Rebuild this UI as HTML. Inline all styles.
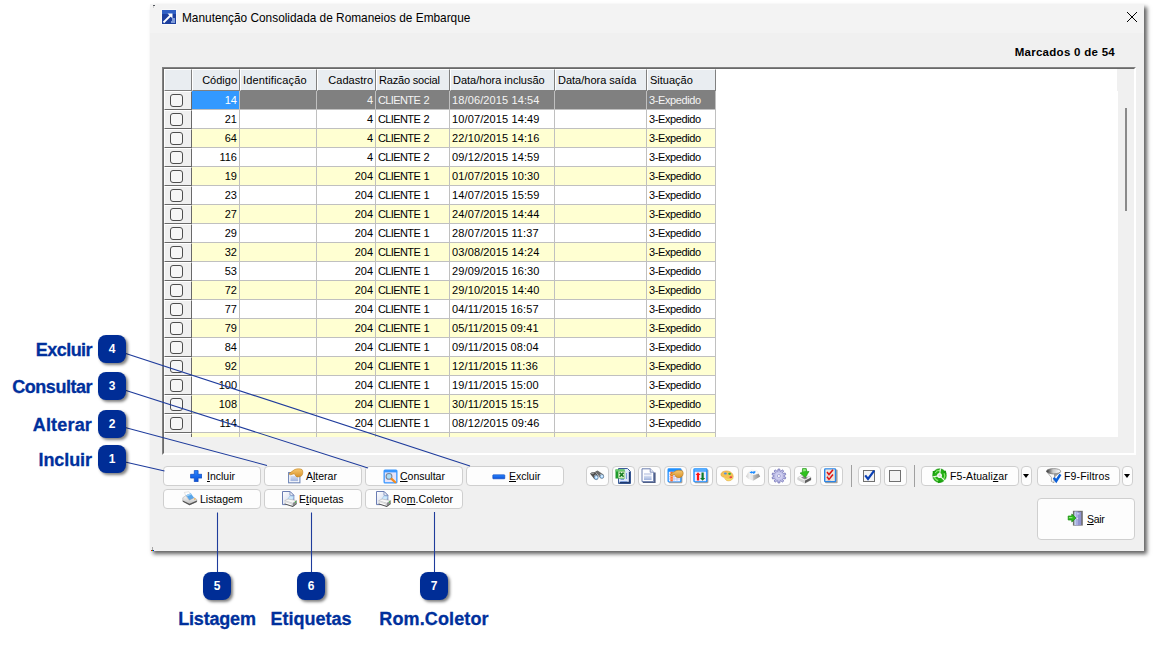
<!DOCTYPE html>
<html lang="pt-BR"><head><meta charset="utf-8"><title>Manutenção Consolidada de Romaneios de Embarque</title>
<style>
html,body{margin:0;padding:0;}
body{width:1153px;height:647px;background:#fff;position:relative;overflow:hidden;font-family:"Liberation Sans",sans-serif;font-size:11px;color:#000;}
*{box-sizing:border-box;}
.abs{position:absolute;}
.win{position:absolute;left:150px;top:4px;width:994px;height:547px;background:#f0f0f0;box-shadow:3px 3px 4px rgba(0,0,0,.62);}
.tbar{position:absolute;left:0;top:0;width:994px;height:29px;background:#f3f3f3;}
.ttl{position:absolute;left:32px;top:6px;font-size:11.85px;line-height:16px;white-space:nowrap;color:#000;}
.marc{position:absolute;right:29px;top:41px;font-size:11.5px;letter-spacing:.28px;font-weight:bold;line-height:14px;white-space:nowrap;}
.grid{position:absolute;left:164px;top:69px;width:970px;height:384px;background:#fff;overflow:hidden;}
.gridb{position:absolute;left:162px;top:67px;width:974px;height:388px;border:1px solid;border-color:#828282 #fff #fff #828282;}
.gridb i{position:absolute;left:0;top:0;right:0;bottom:0;border:1px solid;border-color:#696969 #fff #fff #696969;}
.hrow{position:absolute;left:0;top:0;height:22px;width:552px;}
.hc{position:absolute;top:0;height:22px;background:#e9edf1;border:1px solid;border-color:#fff #808080 #808080 #fff;padding:3px 2px 0 2px;line-height:14px;white-space:nowrap;overflow:hidden;}
.hc.r{text-align:right;}
.row{position:absolute;left:0;height:19px;width:552px;}
.row .c{position:absolute;top:0;height:19px;border-right:1px solid #c0c0c0;border-bottom:1px solid #c0c0c0;padding:2px 2px 0 2px;line-height:14px;white-space:nowrap;overflow:hidden;background:#fff;}
.row.alt .c{background:#ffffd2;}
.row.sel .c{background:#808080;color:#f4f4f4;border-color:#c0c0c0;}
.row.sel .c.cur{background:#3399ff;color:#fff;}
.c.r{text-align:right;}
.fc{position:absolute;top:0;height:19px;background:#f0f0f0;border:1px solid;border-color:#fff #696969 #696969 #fff;}
.cb{position:absolute;left:5px;top:2px;width:13px;height:13px;border:1px solid #4d4d4d;border-radius:3px;background:#f6f6f6;}
.row.part{height:4px;overflow:hidden;}
.vsb{position:absolute;left:954px;top:0;width:16px;height:368px;background:#f0f0f0;}
.vthumb{position:absolute;left:7px;top:39px;width:2px;height:103px;background:#8a8a8a;}
.hsb{position:absolute;left:0;top:368px;width:970px;height:16px;background:#f0f0f0;}
.btn{position:absolute;height:20px;border:1px solid #cfcfcf;border-radius:4px;background:#fdfdfd;font-size:10.5px;line-height:14px;white-space:nowrap;}
.btn.sb{width:23px;}
.btn.sb svg{left:2px;top:1px;}
.btn.dd{width:11px;}
.btn.dd i{position:absolute;left:1px;top:7px;width:0;height:0;border-left:3.5px solid transparent;border-right:3.5px solid transparent;border-top:4px solid #000;}
.btn .t{position:absolute;top:2px;}
.btn svg{position:absolute;}
u{text-decoration:underline;}
.badge{position:absolute;width:28px;height:28px;border-radius:8px;background:#002d96;color:#fff;font-weight:bold;font-size:12px;line-height:28px;text-align:center;box-shadow:2px 2px 3px rgba(0,0,0,.5);}
.lbl{position:absolute;color:#00309c;font-weight:bold;font-size:18px;line-height:20px;white-space:nowrap;letter-spacing:-0.6px;}
.lbl.c{width:200px;text-align:center;}
.sep{position:absolute;width:1px;background:#a0a0a0;}
.k4{letter-spacing:-.62px;}
.k5{letter-spacing:.12px;}
.k7{letter-spacing:-.4px;}
.h2{letter-spacing:.15px;}
.h4{letter-spacing:-.18px;}
.lbl{-webkit-text-stroke:.3px #00309c;}
.vsx{position:absolute;left:953px;top:0;width:1px;height:22px;background:#f0f0f0;}
.k4{word-spacing:1px;}

</style></head>
<body>
<div class="win">
 <div class="tbar"></div>
 <svg class="abs" style="left:11px;top:5px" width="16" height="16" viewBox="0 0 16 16"><rect x="0.5" y="0.5" width="15" height="15" fill="#fff"/><rect x="1" y="1" width="14" height="14" fill="#1c3f9e"/><rect x="1" y="1" width="14" height="4" fill="#2f5fc4"/><path d="M2.5 13.5 L9.5 6.5" stroke="#fff" stroke-width="1.8" fill="none"/><path d="M6.5 4.5 H11.5 V9.5 Z" fill="#fff"/><path d="M11 9h3v5h-4v-2h1z" fill="#7f9bd8"/></svg>
 <div class="ttl">Manutenção Consolidada de Romaneios de Embarque</div>
 <svg class="abs" style="left:976px;top:7px" width="12" height="12" viewBox="0 0 12 12"><path d="M1 1 L11 11 M11 1 L1 11" stroke="#000" stroke-width="1" fill="none"/></svg>
 <div class="marc">Marcados 0 de 54</div>
</div>
<div class="abs" style="left:153px;top:5px;width:2px;height:1px;background:#55595f"></div><div class="abs" style="left:153px;top:6px;width:1px;height:2px;background:#d0d0d0"></div>
<div class="abs" style="left:151px;top:550px;width:1px;height:1px;background:#f00"></div><div class="abs" style="left:152px;top:550px;width:1px;height:1px;background:#0c0"></div><div class="abs" style="left:153px;top:550px;width:1px;height:1px;background:#00f"></div><div class="abs" style="left:152px;top:547px;width:1px;height:3px;background:#a8a8a8"></div>
<div class="gridb"><i></i></div>
<div class="grid">
<div class="hrow"><div class="hc h0 fx" style="left:0px;width:28px"></div><div class="hc h1 r" style="left:28px;width:48px">Código</div><div class="hc h2" style="left:76px;width:77px">Identificação</div><div class="hc h3 r" style="left:153px;width:59px">Cadastro</div><div class="hc h4" style="left:212px;width:74px">Razão social</div><div class="hc h5" style="left:286px;width:105px">Data/hora inclusão</div><div class="hc h6" style="left:391px;width:92px">Data/hora saída</div><div class="hc h7" style="left:483px;width:69px">Situação</div></div>
<div class="row sel" style="top:22px"><div class="fc" style="left:0px;width:28px"><span class="cb"></span></div><div class="c k1 r cur" style="left:28px;width:48px">14</div><div class="c k2" style="left:76px;width:77px"></div><div class="c k3 r" style="left:153px;width:59px">4</div><div class="c k4" style="left:212px;width:74px">CLIENTE 2</div><div class="c k5" style="left:286px;width:105px">18/06/2015 14:54</div><div class="c k6" style="left:391px;width:92px"></div><div class="c k7" style="left:483px;width:69px">3-Expedido</div></div>
<div class="row" style="top:41px"><div class="fc" style="left:0px;width:28px"><span class="cb"></span></div><div class="c k1 r" style="left:28px;width:48px">21</div><div class="c k2" style="left:76px;width:77px"></div><div class="c k3 r" style="left:153px;width:59px">4</div><div class="c k4" style="left:212px;width:74px">CLIENTE 2</div><div class="c k5" style="left:286px;width:105px">10/07/2015 14:49</div><div class="c k6" style="left:391px;width:92px"></div><div class="c k7" style="left:483px;width:69px">3-Expedido</div></div>
<div class="row alt" style="top:60px"><div class="fc" style="left:0px;width:28px"><span class="cb"></span></div><div class="c k1 r" style="left:28px;width:48px">64</div><div class="c k2" style="left:76px;width:77px"></div><div class="c k3 r" style="left:153px;width:59px">4</div><div class="c k4" style="left:212px;width:74px">CLIENTE 2</div><div class="c k5" style="left:286px;width:105px">22/10/2015 14:16</div><div class="c k6" style="left:391px;width:92px"></div><div class="c k7" style="left:483px;width:69px">3-Expedido</div></div>
<div class="row" style="top:79px"><div class="fc" style="left:0px;width:28px"><span class="cb"></span></div><div class="c k1 r" style="left:28px;width:48px">116</div><div class="c k2" style="left:76px;width:77px"></div><div class="c k3 r" style="left:153px;width:59px">4</div><div class="c k4" style="left:212px;width:74px">CLIENTE 2</div><div class="c k5" style="left:286px;width:105px">09/12/2015 14:59</div><div class="c k6" style="left:391px;width:92px"></div><div class="c k7" style="left:483px;width:69px">3-Expedido</div></div>
<div class="row alt" style="top:98px"><div class="fc" style="left:0px;width:28px"><span class="cb"></span></div><div class="c k1 r" style="left:28px;width:48px">19</div><div class="c k2" style="left:76px;width:77px"></div><div class="c k3 r" style="left:153px;width:59px">204</div><div class="c k4" style="left:212px;width:74px">CLIENTE 1</div><div class="c k5" style="left:286px;width:105px">01/07/2015 10:30</div><div class="c k6" style="left:391px;width:92px"></div><div class="c k7" style="left:483px;width:69px">3-Expedido</div></div>
<div class="row" style="top:117px"><div class="fc" style="left:0px;width:28px"><span class="cb"></span></div><div class="c k1 r" style="left:28px;width:48px">23</div><div class="c k2" style="left:76px;width:77px"></div><div class="c k3 r" style="left:153px;width:59px">204</div><div class="c k4" style="left:212px;width:74px">CLIENTE 1</div><div class="c k5" style="left:286px;width:105px">14/07/2015 15:59</div><div class="c k6" style="left:391px;width:92px"></div><div class="c k7" style="left:483px;width:69px">3-Expedido</div></div>
<div class="row alt" style="top:136px"><div class="fc" style="left:0px;width:28px"><span class="cb"></span></div><div class="c k1 r" style="left:28px;width:48px">27</div><div class="c k2" style="left:76px;width:77px"></div><div class="c k3 r" style="left:153px;width:59px">204</div><div class="c k4" style="left:212px;width:74px">CLIENTE 1</div><div class="c k5" style="left:286px;width:105px">24/07/2015 14:44</div><div class="c k6" style="left:391px;width:92px"></div><div class="c k7" style="left:483px;width:69px">3-Expedido</div></div>
<div class="row" style="top:155px"><div class="fc" style="left:0px;width:28px"><span class="cb"></span></div><div class="c k1 r" style="left:28px;width:48px">29</div><div class="c k2" style="left:76px;width:77px"></div><div class="c k3 r" style="left:153px;width:59px">204</div><div class="c k4" style="left:212px;width:74px">CLIENTE 1</div><div class="c k5" style="left:286px;width:105px">28/07/2015 11:37</div><div class="c k6" style="left:391px;width:92px"></div><div class="c k7" style="left:483px;width:69px">3-Expedido</div></div>
<div class="row alt" style="top:174px"><div class="fc" style="left:0px;width:28px"><span class="cb"></span></div><div class="c k1 r" style="left:28px;width:48px">32</div><div class="c k2" style="left:76px;width:77px"></div><div class="c k3 r" style="left:153px;width:59px">204</div><div class="c k4" style="left:212px;width:74px">CLIENTE 1</div><div class="c k5" style="left:286px;width:105px">03/08/2015 14:24</div><div class="c k6" style="left:391px;width:92px"></div><div class="c k7" style="left:483px;width:69px">3-Expedido</div></div>
<div class="row" style="top:193px"><div class="fc" style="left:0px;width:28px"><span class="cb"></span></div><div class="c k1 r" style="left:28px;width:48px">53</div><div class="c k2" style="left:76px;width:77px"></div><div class="c k3 r" style="left:153px;width:59px">204</div><div class="c k4" style="left:212px;width:74px">CLIENTE 1</div><div class="c k5" style="left:286px;width:105px">29/09/2015 16:30</div><div class="c k6" style="left:391px;width:92px"></div><div class="c k7" style="left:483px;width:69px">3-Expedido</div></div>
<div class="row alt" style="top:212px"><div class="fc" style="left:0px;width:28px"><span class="cb"></span></div><div class="c k1 r" style="left:28px;width:48px">72</div><div class="c k2" style="left:76px;width:77px"></div><div class="c k3 r" style="left:153px;width:59px">204</div><div class="c k4" style="left:212px;width:74px">CLIENTE 1</div><div class="c k5" style="left:286px;width:105px">29/10/2015 14:40</div><div class="c k6" style="left:391px;width:92px"></div><div class="c k7" style="left:483px;width:69px">3-Expedido</div></div>
<div class="row" style="top:231px"><div class="fc" style="left:0px;width:28px"><span class="cb"></span></div><div class="c k1 r" style="left:28px;width:48px">77</div><div class="c k2" style="left:76px;width:77px"></div><div class="c k3 r" style="left:153px;width:59px">204</div><div class="c k4" style="left:212px;width:74px">CLIENTE 1</div><div class="c k5" style="left:286px;width:105px">04/11/2015 16:57</div><div class="c k6" style="left:391px;width:92px"></div><div class="c k7" style="left:483px;width:69px">3-Expedido</div></div>
<div class="row alt" style="top:250px"><div class="fc" style="left:0px;width:28px"><span class="cb"></span></div><div class="c k1 r" style="left:28px;width:48px">79</div><div class="c k2" style="left:76px;width:77px"></div><div class="c k3 r" style="left:153px;width:59px">204</div><div class="c k4" style="left:212px;width:74px">CLIENTE 1</div><div class="c k5" style="left:286px;width:105px">05/11/2015 09:41</div><div class="c k6" style="left:391px;width:92px"></div><div class="c k7" style="left:483px;width:69px">3-Expedido</div></div>
<div class="row" style="top:269px"><div class="fc" style="left:0px;width:28px"><span class="cb"></span></div><div class="c k1 r" style="left:28px;width:48px">84</div><div class="c k2" style="left:76px;width:77px"></div><div class="c k3 r" style="left:153px;width:59px">204</div><div class="c k4" style="left:212px;width:74px">CLIENTE 1</div><div class="c k5" style="left:286px;width:105px">09/11/2015 08:04</div><div class="c k6" style="left:391px;width:92px"></div><div class="c k7" style="left:483px;width:69px">3-Expedido</div></div>
<div class="row alt" style="top:288px"><div class="fc" style="left:0px;width:28px"><span class="cb"></span></div><div class="c k1 r" style="left:28px;width:48px">92</div><div class="c k2" style="left:76px;width:77px"></div><div class="c k3 r" style="left:153px;width:59px">204</div><div class="c k4" style="left:212px;width:74px">CLIENTE 1</div><div class="c k5" style="left:286px;width:105px">12/11/2015 11:36</div><div class="c k6" style="left:391px;width:92px"></div><div class="c k7" style="left:483px;width:69px">3-Expedido</div></div>
<div class="row" style="top:307px"><div class="fc" style="left:0px;width:28px"><span class="cb"></span></div><div class="c k1 r" style="left:28px;width:48px">100</div><div class="c k2" style="left:76px;width:77px"></div><div class="c k3 r" style="left:153px;width:59px">204</div><div class="c k4" style="left:212px;width:74px">CLIENTE 1</div><div class="c k5" style="left:286px;width:105px">19/11/2015 15:00</div><div class="c k6" style="left:391px;width:92px"></div><div class="c k7" style="left:483px;width:69px">3-Expedido</div></div>
<div class="row alt" style="top:326px"><div class="fc" style="left:0px;width:28px"><span class="cb"></span></div><div class="c k1 r" style="left:28px;width:48px">108</div><div class="c k2" style="left:76px;width:77px"></div><div class="c k3 r" style="left:153px;width:59px">204</div><div class="c k4" style="left:212px;width:74px">CLIENTE 1</div><div class="c k5" style="left:286px;width:105px">30/11/2015 15:15</div><div class="c k6" style="left:391px;width:92px"></div><div class="c k7" style="left:483px;width:69px">3-Expedido</div></div>
<div class="row" style="top:345px"><div class="fc" style="left:0px;width:28px"><span class="cb"></span></div><div class="c k1 r" style="left:28px;width:48px">114</div><div class="c k2" style="left:76px;width:77px"></div><div class="c k3 r" style="left:153px;width:59px">204</div><div class="c k4" style="left:212px;width:74px">CLIENTE 1</div><div class="c k5" style="left:286px;width:105px">08/12/2015 09:46</div><div class="c k6" style="left:391px;width:92px"></div><div class="c k7" style="left:483px;width:69px">3-Expedido</div></div>
<div class="row alt part" style="top:364px"><div class="fc" style="left:0px;width:28px"></div><div class="c" style="left:28px;width:48px"></div><div class="c" style="left:76px;width:77px"></div><div class="c" style="left:153px;width:59px"></div><div class="c" style="left:212px;width:74px"></div><div class="c" style="left:286px;width:105px"></div><div class="c" style="left:391px;width:92px"></div><div class="c" style="left:483px;width:69px"></div></div>
<div class="vsb"><div class="vthumb"></div></div><div class="vsx"></div><div class="hsb"></div>
</div>
<svg width="0" height="0" style="position:absolute"><defs>
<linearGradient id="gb" x1="0" y1="0" x2="0" y2="1"><stop offset="0" stop-color="#2b86ff"/><stop offset="1" stop-color="#0a50d8"/></linearGradient>
<linearGradient id="gpaper" x1="0" y1="0" x2="0" y2="1"><stop offset="0" stop-color="#d9e1f2"/><stop offset="1" stop-color="#9fb2dd"/></linearGradient>
<linearGradient id="ghand" x1="0" y1="0" x2="0" y2="1"><stop offset="0" stop-color="#f7c870"/><stop offset="1" stop-color="#d8922a"/></linearGradient>
<linearGradient id="gdoc" x1="0" y1="0" x2="1" y2="1"><stop offset="0" stop-color="#fff"/><stop offset="1" stop-color="#c9d2ea"/></linearGradient>
<linearGradient id="ggray" x1="0" y1="0" x2="0" y2="1"><stop offset="0" stop-color="#fafafa"/><stop offset="1" stop-color="#b8b8b8"/></linearGradient>
<g id="docprn">
 <path d="M0.5 0.5 H8 L11.8 4.3 V13.6 H0.5 Z" fill="url(#gdoc)" stroke="#6b7db3"/>
 <path d="M8 0.5 V4.3 H11.8 Z" fill="#fff" stroke="#6b7db3" stroke-width=".8"/>
 <path d="M5.4 8.8 L8 4.8 L11.6 5.6 L10.8 9.4 Z" fill="#cfe8fb" stroke="#86b6e0" stroke-width=".5"/>
 <path d="M2.6 9.8 L6 8 L14.8 9.6 L10.8 12.2 Z" fill="#f8f8f8" stroke="#a6a6a6" stroke-width=".5"/>
 <path d="M2.6 9.8 L10.8 12.2 V15.4 L2.6 12.8 Z" fill="#dedede"/>
 <path d="M10.8 12.2 L14.8 9.6 V12.6 L10.8 15.4 Z" fill="#8c8c8c"/>
 <path d="M4 11.6 L9.2 13.2 V14.2 L4 12.6 Z" fill="#fff"/>
 <path d="M2.6 12.4 L10.8 15 L14.8 12.2 V13 L10.8 15.9 L2.6 13.3 Z" fill="#4a4a4a"/>
 <circle cx="13.6" cy="10.9" r=".7" fill="#35c435"/>
</g>
</defs></svg>
<!-- buttons row 1 -->
<div class="btn" style="left:163px;top:466px;width:98px"><svg style="left:26px;top:3px" width="12.4" height="12.4" viewBox="0 0 13 13"><path d="M4.5 .6h4v3.9h3.9v4h-3.9v3.9h-4v-3.9h-3.9v-4h3.9z" fill="url(#gb)" stroke="#0842b8" stroke-width=".7"/></svg><span class="t" style="left:43px"><u>I</u>ncluir</span></div>
<div class="btn" style="left:264px;top:466px;width:98px"><svg style="left:23px;top:1px" width="17" height="17" viewBox="0 0 17 17"><rect x=".6" y="4.6" width="11.3" height="10.2" fill="#fff" stroke="#6f86b7" stroke-width="1.1"/><rect x="2.4" y="7.6" width="7.8" height="5.6" fill="url(#gpaper)"/><path d="M1.2 6.2 L1.8 5 L6.6 1.6 C8.4 .6 12.8 .6 14 1.6 C15.2 2.8 15 6.4 13.8 7.6 C12.4 8.8 9.4 9.4 8.2 8.4 C7.4 7.6 7 6.4 6.2 5.8 L2.4 6.8 Z" fill="url(#ghand)" stroke="#c07f1c" stroke-width=".6"/></svg><span class="t" style="left:41px">A<u>l</u>terar</span></div>
<div class="btn" style="left:365px;top:466px;width:98px"><svg style="left:17px;top:2px" width="15" height="15" viewBox="0 0 15 15"><rect x=".5" y=".5" width="14" height="14" rx="1.5" fill="#3a98ff"/><rect x="1.8" y="3.4" width="11.4" height="9.8" fill="#e6e4fa"/><circle cx="6" cy="7.4" r="2.9" fill="#a9dcf8" stroke="#7c8798" stroke-width="1.1"/><path d="M8.6 9.9 L12.2 13.2" stroke="#f28b1d" stroke-width="2.2" stroke-linecap="round"/></svg><span class="t" style="left:34px"><u>C</u>onsultar</span></div>
<div class="btn" style="left:466px;top:466px;width:98px"><svg style="left:25px;top:7px" width="14" height="6" viewBox="0 0 14 6"><rect x=".8" y=".8" width="12" height="4" rx=".6" fill="url(#gb)" stroke="#0842b8" stroke-width=".6"/></svg><span class="t" style="left:42px"><u>E</u>xcluir</span></div>
<!-- buttons row 2 -->
<div class="btn" style="left:163px;top:489px;width:98px"><svg style="left:18px;top:1px" width="16" height="15" viewBox="0 0 17 16"><path d="M2.5 1.5 L7.5 .8 L9.5 3.5 L4 5 Z" fill="#fff" stroke="#c8c8c8" stroke-width=".5"/><path d="M4.2 4.4 L9.3 2.4 L13.2 7.6 L8 10 Z" fill="#58a6ea"/><path d="M4.2 4.4 L9.3 2.4 L10.3 3.8 L5.2 5.9 Z" fill="#9fd0f7"/><path d="M.8 7.2 L4.2 5 L7.5 9.8 L13 7.2 L15.8 9.2 V11.2 L8 14.8 L.8 10.8 Z" fill="url(#ggray)" stroke="#9a9a9a" stroke-width=".5"/><path d="M.8 10 L8 13.6 L15.8 10.2 V11.6 L8 15.2 L.8 11.4 Z" fill="#555"/><circle cx="13.6" cy="8.6" r=".8" fill="#f5a623"/></svg><span class="t" style="left:36px">Lista<u>g</u>em</span></div>
<div class="btn" style="left:264px;top:489px;width:98px"><svg style="left:17px;top:1px" width="16" height="17" viewBox="0 0 16 17"><use href="#docprn"/></svg><span class="t" style="left:34px;letter-spacing:.1px">E<u>t</u>iquetas</span></div>
<div class="btn" style="left:365px;top:489px;width:98px"><svg style="left:10px;top:1px" width="16" height="17" viewBox="0 0 16 17"><use href="#docprn"/></svg><span class="t" style="left:27px;letter-spacing:.1px">Ro<u>m</u>.Coletor</span></div>
<!-- small toolbar -->
<div class="btn sb" style="left:586px;top:466px"><svg width="16" height="16" viewBox="0 0 16 16"><path d="M6.2 3.6 L8.6 2.6 L14.4 6.6 L14.6 9.6 L11.4 10 Z" fill="#6a6a6a"/><path d="M1 5.4 L3.4 3.9 L6.4 4 L9.4 8.4 L8 11.4 L5.2 11 Z" fill="#4e4e4e"/><path d="M1.4 5.4 L3.5 4.2 L6 4.4 L4 6.2Z" fill="#9a9a9a"/><path d="M4.6 8.4 L6.6 6.6 L8.2 8Z M10.4 7.4 L12.2 5.8 L13.6 6.8Z" fill="#fff"/><ellipse cx="7.2" cy="9.5" rx="2" ry="2.2" fill="#9ccffc" stroke="#5f6f82" stroke-width=".6"/><ellipse cx="12.8" cy="8.5" rx="1.9" ry="2.1" fill="#9ccffc" stroke="#5f6f82" stroke-width=".6"/><circle cx="7.4" cy="9.2" r=".9" fill="#e6f4ff"/><circle cx="13" cy="8.2" r=".9" fill="#e6f4ff"/></svg></div>
<div class="btn sb" style="left:612px;top:466px"><svg width="16" height="16" viewBox="0 0 16 16"><path d="M3.5 .5 H12.5 L15.5 3.5 V15.5 H3.5 Z" fill="#dfe9fb" stroke="#3b5c99"/><path d="M14.5 3.8 V14.5 H4.5" fill="none" stroke="#1f3a6e" stroke-width="1.3"/><path d="M5.5 11.5 H9 M5.5 13.5 H12 M11.5 5 V11" stroke="#7d9fdc" stroke-width="1"/><rect x=".5" y="1.5" width="9" height="9" fill="#1f9a2b"/><rect x=".5" y="1.5" width="9" height="2" fill="#66c86c"/><rect x="3.3" y="3.4" width="6.6" height="6.6" fill="#e5f6d8" stroke="#7cc070" stroke-width=".5"/><path d="M4.6 4.6 L8.6 8.8 M8.6 4.6 L4.6 8.8" stroke="#1a7c22" stroke-width="1.6"/></svg></div>
<div class="btn sb" style="left:638px;top:466px"><svg width="16" height="16" viewBox="0 0 16 16"><path d="M1.8 14.2 H13.8 V4.6" fill="none" stroke="#4e5d85" stroke-width="1.6"/><path d="M1 .8 H9.2 L12.6 4.2 V13.6 H1 Z" fill="#fdfdff" stroke="#6d7fae"/><path d="M9.2 .8 V4.2 H12.6" fill="#e8ecf8" stroke="#6d7fae" stroke-width=".8"/><path d="M3 6 H10.6" stroke="#a9b6da" stroke-width="1"/><rect x="3" y="7.6" width="7.6" height="4.4" fill="url(#gpaper)"/></svg></div>
<div class="btn sb" style="left:664px;top:466px"><svg width="17" height="16" viewBox="0 0 17 16"><rect x="1.6" y="1.6" width="13.8" height="13.6" rx="1" fill="#6c5a48" opacity=".55"/><rect x=".5" y=".3" width="14" height="14" rx="1.4" fill="#1e90ff"/><rect x="1.8" y="3.8" width="11.4" height="9.6" fill="#f4f4ff"/><path d="M1.8 6.2H13.2M1.8 8.6H13.2M1.8 11H13.2M7 3.8V13.4M10 3.8V13.4" stroke="#b9b9e8" stroke-width=".7"/><rect x="3.4" y="3.8" width="2.4" height="9.6" fill="#ff6a2a"/><path d="M3.4 6.2h2.4M3.4 8.6h2.4M3.4 11h2.4" stroke="#ffd0a0" stroke-width=".7"/><path d="M3.4 7 L4 5.8 L8.2 3.2 C9.5 2 14 1.9 15.4 3 C16.6 4.2 16.4 7.2 15 8.4 C13.6 9.6 10.4 10.2 9.2 9 C8.4 8.2 8.2 7 7.4 6.4 L4.6 7.6 Z" fill="url(#ghand)" stroke="#b87818" stroke-width=".6"/></svg></div>
<div class="btn sb" style="left:690px;top:466px"><svg width="16" height="16" viewBox="0 0 16 16"><rect x="1.6" y="1.6" width="13.8" height="13.6" rx="1" fill="#6c5a48" opacity=".55"/><rect x=".3" y=".3" width="14.2" height="14" rx="1.4" fill="#1e90ff"/><rect x="1.4" y="1.4" width="12" height="1.2" fill="#7fc0ff"/><rect x="1.7" y="3.6" width="11.4" height="9.6" fill="#eeeaff"/><path d="M5 4.2 L7.6 7 H6.1 V12.6 H3.9 V7 H2.6 Z" fill="#ff1313"/><path d="M9.6 12.8 L7 10 H8.5 V4.4 H10.7 V10 H12.2 Z" fill="#0b7a2c"/></svg></div>
<div class="btn sb" style="left:716px;top:466px"><svg width="16" height="16" viewBox="0 0 16 16"><path d="M2 7 C1.6 4.4 4.6 2.8 8 3 C11.6 3.2 14.2 5.6 14.2 8.6 C14.2 11.6 11.6 13 9 12.8 C7 12.6 6.4 11.4 5.8 10 C5 8.8 2.4 9.2 2 7Z" fill="#f6c254" stroke="#e2a03a" stroke-width=".6"/><path d="M4 9 C6 9.4 6.6 12 9 12.6 C11.6 12.8 13.8 11.4 14 9 C12 11 9 11.4 7.2 10.2Z" fill="#f1e067"/><ellipse cx="6.4" cy="5.5" rx="1.5" ry="1.1" fill="#4f8fe6"/><ellipse cx="10.6" cy="5.8" rx="1.4" ry="1.1" fill="#35b53c"/><ellipse cx="11.8" cy="9.3" rx="1.4" ry="1" fill="#e8424c"/></svg></div>
<div class="btn sb" style="left:742px;top:466px"><svg width="16" height="16" viewBox="0 0 16 16"><defs><linearGradient id="gkr" x1="0" y1="0" x2="1" y2="0"><stop offset="0" stop-color="#c4c4c4"/><stop offset="1" stop-color="#868686"/></linearGradient><linearGradient id="gkl" x1="0" y1="0" x2="1" y2="0"><stop offset="0" stop-color="#cfcfcf"/><stop offset=".5" stop-color="#efefef"/><stop offset="1" stop-color="#e2e2e2"/></linearGradient></defs><path d="M.9 8.6 L3 4.5 L8 7 L8.2 12.8 L3.2 10.8 Z" fill="url(#gkl)"/><path d="M8 7 L13.5 5.5 L15.2 8.6 L8.2 12.8 Z" fill="url(#gkr)"/><path d="M3 4.5 L6.5 2 L12 2.8 L13.5 5.5 L8 7 Z" fill="#fdfdfd" stroke="#e6e0d8" stroke-width=".4"/><path d="M4.3 4.6 L7 3 L7.1 3.8 L10.4 2.9 L10.3 4.8 L8.6 6 L7.8 5 L6.6 5.4 Z" fill="#1e8cff"/></svg></div>
<div class="btn sb" style="left:768px;top:466px"><svg width="16" height="16" viewBox="0 0 16 16"><g transform="translate(7.9,8)"><path d="M-1.01 -5.10 L-0.92 -6.94 L0.92 -6.94 L1.01 -5.10 L2.18 -4.72 L3.33 -6.16 L4.82 -5.07 L3.81 -3.54 L4.54 -2.53 L6.31 -3.02 L6.88 -1.27 L5.16 -0.62 L5.16 0.62 L6.88 1.27 L6.31 3.02 L4.54 2.53 L3.81 3.54 L4.82 5.07 L3.33 6.16 L2.18 4.72 L1.01 5.10 L0.92 6.94 L-0.92 6.94 L-1.01 5.10 L-2.18 4.72 L-3.33 6.16 L-4.82 5.07 L-3.81 3.54 L-4.54 2.53 L-6.31 3.02 L-6.88 1.27 L-5.16 0.62 L-5.16 -0.62 L-6.88 -1.27 L-6.31 -3.02 L-4.54 -2.53 L-3.81 -3.54 L-4.82 -5.07 L-3.33 -6.16 L-2.18 -4.72Z" fill="#bdbde6" stroke="#7474b8" stroke-width=".8" stroke-linejoin="round"/><circle r="3.6" fill="#cfcff0"/><circle r="1.5" fill="#fff" stroke="#8c8cc8" stroke-width=".7"/></g></svg></div>
<div class="btn sb" style="left:794px;top:466px"><svg width="16" height="16" viewBox="0 0 16 16"><path d="M.8 9.6 L6.6 6.4 L14 9.4 L14 12 L8 15.2 L.8 11.6 Z" fill="#f4f4f4" stroke="#b0b0b0" stroke-width=".5"/><path d="M8 12.6 L14 9.4 V12 L8 15.2 Z" fill="#5c5c5c"/><path d="M.8 9.6 L8 12.6 V15.2 L.8 11.6 Z" fill="#d2d2d2"/><path d="M4 9.6 L7 8 L11 9.8 L8 11.4 Z" fill="#8a8a8a"/><path d="M5.6 .4 H9.2 L10 3.8 L12 3.4 L8.4 9.6 L3 5 L5.2 4.6 Z" fill="#2fc21d" stroke="#1d8e12" stroke-width=".6"/><path d="M6.2 1 H8.6 L9 3 L6 3.6Z" fill="#8be77a"/></svg></div>
<div class="btn sb" style="left:820px;top:466px"><svg width="16" height="16" viewBox="0 0 16 16"><rect x="2" y="1.6" width="12.6" height="13.6" rx="1" fill="#6c5a48" opacity=".55"/><rect x="1" y=".3" width="12.2" height="14" rx="1.4" fill="#2a86e8"/><rect x="2.4" y="1.4" width="9.4" height="11.6" fill="#ece5dd"/><rect x="4.2" y="4.2" width="3.6" height="3.4" fill="#fff" stroke="#bbb" stroke-width=".5"/><rect x="4.2" y="9" width="3.6" height="3.4" fill="#fff" stroke="#bbb" stroke-width=".5"/><path d="M4 4 L6 6.6 L10 1.8" fill="none" stroke="#e01010" stroke-width="1.5"/><path d="M4 8.8 L6 11.4 L10 6.6" fill="none" stroke="#e01010" stroke-width="1.5"/></svg></div>
<div class="sep" style="left:851px;top:465px;height:22px"></div>
<div class="btn sb" style="left:858px;top:466px"><svg width="16" height="16" viewBox="0 0 16 16"><rect x="2.5" y="2.5" width="11" height="11" fill="#f4f4f4" stroke="#707070"/><path d="M4.2 7.4 L7 11 L13.2 2.6" fill="none" stroke="#0a3fb4" stroke-width="2.2"/></svg></div>
<div class="btn sb" style="left:884px;top:466px"><svg width="16" height="16" viewBox="0 0 16 16"><rect x="2.5" y="2.5" width="11" height="11" fill="#f4f4f4" stroke="#707070"/></svg></div>
<div class="sep" style="left:914px;top:465px;height:22px"></div>
<div class="btn" style="left:921px;top:466px;width:98px"><svg style="left:9px;top:0px" width="17" height="17" viewBox="0 0 17 17"><g transform="translate(8.5,8.6)"><circle r="4.6" fill="none" stroke="#23ad15" stroke-width="4.6"/><circle r="6.9" fill="none" stroke="#128a0a" stroke-width=".5"/><circle r="5.2" fill="none" stroke="#86e86a" stroke-width="1.3" stroke-dasharray="6 4.89" transform="rotate(-150)"/><path d="M0 0 L1 -7.2 M0 0 L5.4 5.2 M0 0 L-7.2 1.4" stroke="#f0f7ee" stroke-width="1.1"/><path d="M-6.8 -4.6 L-3.4 -4.6 L-6.6 -1Z M6.4 -5 L6.9 -1.4 L3.4 -3.6Z M-1.6 7.7 L-1 4 L2.2 6.4Z" fill="#179b0d"/><circle r="2.3" fill="#f6f6f6"/><circle r="1" fill="#c9c9c9"/></g></svg><span class="t" style="left:28px;letter-spacing:.1px">F5-Atuali<u>z</u>ar</span></div>
<div class="btn dd" style="left:1021px;top:466px"><i></i></div>
<div class="btn" style="left:1037px;top:466px;width:83px"><svg style="left:8px;top:1px" width="17" height="16" viewBox="0 0 17 16"><defs><linearGradient id="gfun" x1="0" y1="0" x2="1" y2="0"><stop offset="0" stop-color="#2e2e2e"/><stop offset=".45" stop-color="#c9c9c9"/><stop offset="1" stop-color="#fff"/></linearGradient></defs><path d="M.6 3.6 L5.4 9.4 V13.4 L8 14.8 V9.4 L14.6 3.8 C12 6.6 3 6.4 .6 3.6Z" fill="#fafafa" stroke="#8c8c8c" stroke-width=".7"/><path d="M8 9.4 L14.6 3.8 C13 5.4 10 6 8 6 Z" fill="#9c9c9c"/><ellipse cx="7.6" cy="3.2" rx="7.1" ry="2.6" fill="url(#gfun)" stroke="#7a7a7a" stroke-width=".7"/><path d="M7.8 9.8 L10.2 13 L14.4 6.4" fill="none" stroke="#0b5fd8" stroke-width="2.5"/></svg><span class="t" style="left:26px;letter-spacing:.15px">F9-Filtros</span></div>
<div class="btn dd" style="left:1122px;top:466px"><i></i></div>
<div class="btn" style="left:1037px;top:498px;width:98px;height:42px"><svg style="left:29px;top:11px" width="17" height="17" viewBox="0 0 17 17"><rect x="5.9" y=".8" width="9.9" height="14.8" fill="#6f6f6f"/><rect x="7.4" y="1.6" width="1.6" height="13.4" fill="#cfe6fb"/><path d="M8.8 1.4 L14.2 2 V15 L8.8 15.4 Z" fill="#8f93cf"/><path d="M8.8 1.4 L11 1.7 V15.2 L8.8 15.4Z" fill="#a9addf"/><rect x="10.2" y="3.4" width="2.2" height=".9" fill="#e8e8fa"/><rect x="9.8" y="7.8" width="1.3" height="1.2" fill="#dcdcf4"/><path d="M1.2 6 H4.8 V4 L9 8 L4.8 12 V10 H1.2 Z" fill="#2db81c" stroke="#158a0c" stroke-width=".7"/><path d="M2 7 H5.4 V8.2 H2Z" fill="#8be77a"/></svg><span class="t" style="left:49px;top:13px;letter-spacing:-.3px"><u>S</u>air</span></div>
<!-- callouts -->
<svg class="abs" style="left:0;top:0;pointer-events:none" width="1153" height="647" viewBox="0 0 1153 647"><g stroke="#1f3c9c" stroke-width="1.1" fill="none"><path d="M112 349 L470 466"/><path d="M112 386 L368 468"/><path d="M112 424 L267 465.5"/><path d="M112 459 L164.5 471"/><path d="M217.5 512.5 V575"/><path d="M311.5 512.5 V575"/><path d="M434.5 512 V575"/></g></svg>
<div class="lbl" style="right:1061px;top:340px;letter-spacing:-.55px">Excluir</div><div class="badge" style="left:98px;top:335px">4</div>
<div class="lbl" style="right:1061px;top:377px;letter-spacing:-.48px">Consultar</div><div class="badge" style="left:98px;top:372px">3</div>
<div class="lbl" style="right:1061px;top:415px;letter-spacing:.17px">Alterar</div><div class="badge" style="left:98px;top:410px">2</div>
<div class="lbl" style="right:1061px;top:450px;letter-spacing:-.07px">Incluir</div><div class="badge" style="left:98px;top:445px">1</div>
<div class="badge" style="left:203px;top:572px">5</div><div class="lbl c" style="left:117px;top:609px;letter-spacing:-.19px">Listagem</div>
<div class="badge" style="left:297px;top:572px">6</div><div class="lbl c" style="left:211px;top:609px;letter-spacing:-.01px">Etiquetas</div>
<div class="badge" style="left:420px;top:572px">7</div><div class="lbl c" style="left:334px;top:609px;letter-spacing:.13px">Rom.Coletor</div>

</body></html>
